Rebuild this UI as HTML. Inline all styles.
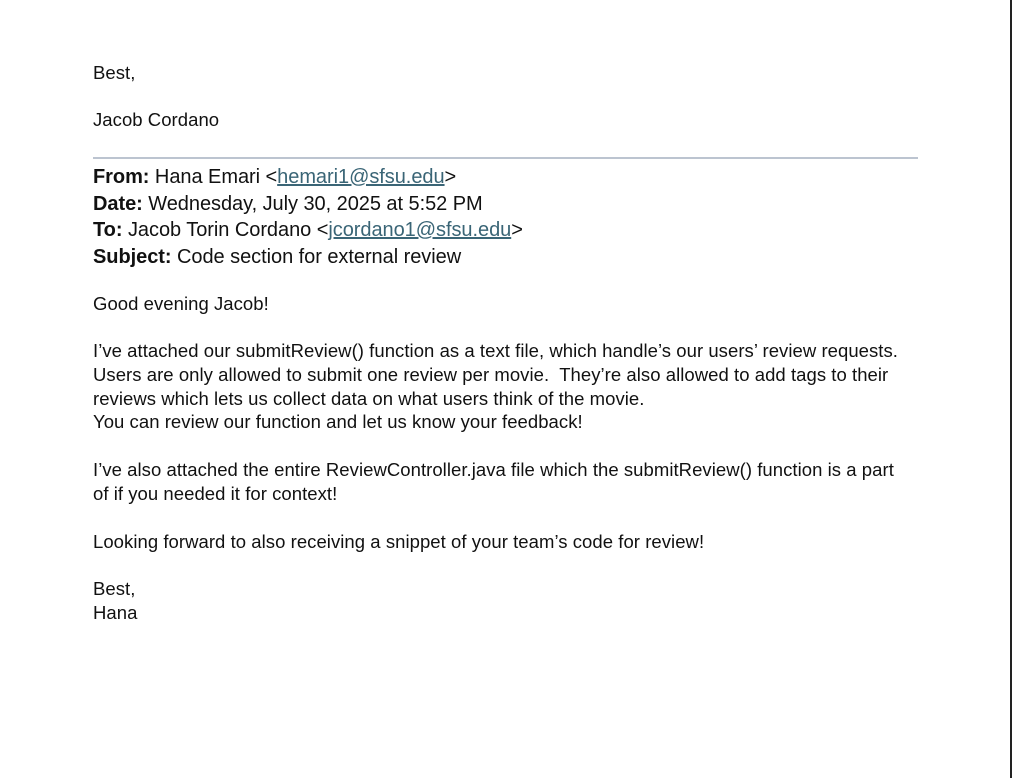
<!DOCTYPE html>
<html><head><meta charset="utf-8"><style>
body{margin:0;width:1012px;height:778px;background:#fff;position:relative;overflow:hidden;font-family:"Liberation Sans",sans-serif;color:#111;}
.l{position:absolute;left:93px;white-space:nowrap;font-size:18.5px;line-height:24px;letter-spacing:0.05px;}
.h{font-size:20px;line-height:26px;letter-spacing:-0.05px;}
a{color:#3a6576;text-decoration:underline;}
.vr{position:absolute;left:1010px;top:0;width:2px;height:778px;background:#222;}
.hr{position:absolute;left:93px;top:157px;width:825px;height:2px;background:#bcc4d0;}
</style></head><body>
<div class="vr"></div>
<div class="l" style="top:61px">Best,</div>
<div class="l" style="top:108px">Jacob Cordano</div>
<div class="hr"></div>
<div class="l h" style="top:164px"><b>From:</b> Hana Emari &lt;<a>hemari1@sfsu.edu</a>&gt;</div>
<div class="l h" style="top:191px"><b>Date:</b> Wednesday, July 30, 2025 at 5:52 PM</div>
<div class="l h" style="top:217px"><b>To:</b> Jacob Torin Cordano &lt;<a>jcordano1@sfsu.edu</a>&gt;</div>
<div class="l h" style="top:244px"><b>Subject:</b> Code section for external review</div>
<div class="l" style="top:292px">Good evening Jacob!</div>
<div class="l" style="top:339px">I’ve attached our submitReview() function as a text file, which handle’s our users’ review requests.</div>
<div class="l" style="top:363px">Users are only allowed to submit one review per movie.&nbsp; They’re also allowed to add tags to their</div>
<div class="l" style="top:387px">reviews which lets us collect data on what users think of the movie.</div>
<div class="l" style="top:410px">You can review our function and let us know your feedback!</div>
<div class="l" style="top:458px">I’ve also attached the entire ReviewController.java file which the submitReview() function is a part</div>
<div class="l" style="top:482px">of if you needed it for context!</div>
<div class="l" style="top:530px">Looking forward to also receiving a snippet of your team’s code for review!</div>
<div class="l" style="top:577px">Best,</div>
<div class="l" style="top:601px">Hana</div>
</body></html>
